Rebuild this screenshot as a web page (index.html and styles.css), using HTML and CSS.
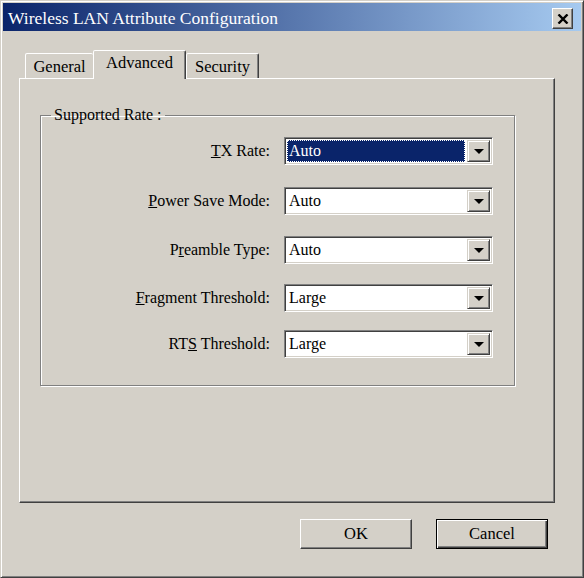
FILE: index.html
```html
<!DOCTYPE html>
<html lang="en">
<head>
    <meta charset="UTF-8">
    <title>Wireless LAN Attribute Configuration</title>
    <link rel="stylesheet" href="styles.css">
</head>
<body>
    <div class="window">
        <div class="titlebar">
            <span class="title">Wireless LAN Attribute Configuration</span>
            <span class="close">
                <svg width="12" height="10" viewBox="0 0 12 10"><path d="M1.5 0.5 L10.5 9.5 M10.5 0.5 L1.5 9.5" stroke="#000" stroke-width="2.4"/></svg>
            </span>
        </div>

        <div class="content">
            <div class="tabs">
                <div class="tab tab-general">General</div>
                <div class="tab tab-active">Advanced</div>
                <div class="tab tab-security">Security</div>
            </div>

            <div class="panel">
                <fieldset class="group">
                    <legend>Supported Rate :</legend>

                    <div class="row row-tx">
                        <label><u>T</u>X Rate:</label>
                        <div class="combo">
                            <span class="value selected">Auto</span>
                            <span class="drop"><span class="arrow"></span></span>
                        </div>
                    </div>
                    <div class="row row-power">
                        <label><u>P</u>ower Save Mode:</label>
                        <div class="combo">
                            <span class="value">Auto</span>
                            <span class="drop"><span class="arrow"></span></span>
                        </div>
                    </div>
                    <div class="row row-preamble">
                        <label>P<u>r</u>eamble Type:</label>
                        <div class="combo">
                            <span class="value">Auto</span>
                            <span class="drop"><span class="arrow"></span></span>
                        </div>
                    </div>
                    <div class="row row-fragment">
                        <label><u>F</u>ragment Threshold:</label>
                        <div class="combo">
                            <span class="value">Large</span>
                            <span class="drop"><span class="arrow"></span></span>
                        </div>
                    </div>
                    <div class="row row-rts">
                        <label>RT<u>S</u> Threshold:</label>
                        <div class="combo">
                            <span class="value">Large</span>
                            <span class="drop"><span class="arrow"></span></span>
                        </div>
                    </div>
                </fieldset>
            </div>

            <div class="actions">
                <button class="btn">OK</button>
                <button class="btn btn-default">Cancel</button>
            </div>
        </div>
    </div>
</body>
</html>
```

FILE: styles.css
```css
body {
    margin: 0;
    background: #d4d0c8;
    font-family: "Liberation Serif", "Times New Roman", serif;
    font-size: 16px;
    color: #000;
}
.window {
    box-sizing: border-box;
    width: 584px;
    height: 578px;
    padding: 2px;
    background: #d4d0c8;
    border: 1px solid;
    border-color: #d4d0c8 #404040 #404040 #d4d0c8;
    box-shadow: inset 1px 1px #fff, inset -1px -1px #808080;
}
.titlebar {
    height: 28px;
    display: flex;
    align-items: center;
    justify-content: space-between;
    background: linear-gradient(to right, #0a246a, #a6caf0);
    color: #fff;
}
.title {
    font-size: 17.5px;
    padding-left: 5px;
    padding-top: 2px;
}
.close {
    box-sizing: border-box;
    width: 21px;
    height: 21px;
    margin-right: 8px;
    margin-top: 3px;
    display: flex;
    align-items: center;
    justify-content: center;
    background: #d4d0c8;
    border: 1px solid;
    border-color: #fff #404040 #404040 #fff;
    box-shadow: inset -1px -1px #808080;
}
.content {
    padding: 19px 0 0 16px;
}
.tabs {
    display: flex;
    align-items: flex-end;
    height: 28px;
    padding-left: 6px;
    position: relative;
    z-index: 1;
}
.tab {
    box-sizing: border-box;
    height: 25px;
    display: flex;
    align-items: center;
    justify-content: center;
    background: #d4d0c8;
    border: 1px solid;
    border-bottom: none;
    border-color: #fff #404040 transparent #fff;
    border-radius: 2px 2px 0 0;
    box-shadow: inset -1px 0 #808080;
    padding-top: 2px;
    font-size: 16.5px;
}
.tab-general {
    width: 68px;
    border-right: none;
    box-shadow: none;
}
.tab-active {
    width: 93px;
    height: 29px;
    margin-bottom: -1px;
    padding-top: 0;
    padding-bottom: 4px;
}
.tab-security {
    width: 73px;
}
.panel {
    box-sizing: border-box;
    width: 536px;
    height: 425px;
    border: 1px solid;
    border-color: #fff #404040 #404040 #fff;
    box-shadow: inset -1px -1px #808080;
    padding: 28px 0 0 20px;
}
.group {
    box-sizing: border-box;
    width: 475px;
    height: 279px;
    margin: 0;
    padding: 0;
    border: 1px solid #808080;
    box-shadow: inset 1px 1px #fff, 1px 1px #fff;
}
.group legend {
    line-height: 16px;
    margin-left: 10px;
    padding: 0 3px;
}
.row {
    display: flex;
    align-items: center;
}
.row-tx { margin-top: 14px; }
.row-power { margin-top: 22px; }
.row-preamble { margin-top: 21px; }
.row-fragment { margin-top: 20px; }
.row-rts { margin-top: 18px; }
.row label {
    width: 229px;
    text-align: right;
    padding-right: 14px;
}
.combo {
    box-sizing: border-box;
    width: 209px;
    height: 28px;
    display: flex;
    align-items: stretch;
    background: #fff;
    border: 1px solid;
    border-color: #808080 #fff #fff #808080;
    box-shadow: inset 1px 1px #404040, inset -1px -1px #d4d0c8;
    padding: 2px;
}
.value {
    flex: 1;
    display: flex;
    align-items: center;
    padding-left: 2px;
    margin-right: 2px;
}
.value.selected {
    background: #0a246a;
    color: #fff;
    outline: 1px dotted #fff;
    outline-offset: -1px;
}
.drop {
    box-sizing: border-box;
    width: 23px;
    display: flex;
    align-items: center;
    justify-content: center;
    background: #d4d0c8;
    border: 1px solid;
    border-color: #d4d0c8 #404040 #404040 #d4d0c8;
    box-shadow: inset 1px 1px #fff, inset -1px -1px #808080;
}
.arrow {
    width: 0;
    height: 0;
    border-left: 5px solid transparent;
    border-right: 5px solid transparent;
    border-top: 5px solid #000;
    margin-top: 1px;
}
.actions {
    display: flex;
    justify-content: flex-end;
    gap: 24px;
    margin-top: 16px;
    padding-right: 33px;
}
.btn {
    box-sizing: border-box;
    width: 112px;
    height: 30px;
    font-family: inherit;
    font-size: 16.5px;
    color: #000;
    background: #d4d0c8;
    border: 1px solid;
    border-color: #fff #404040 #404040 #fff;
    box-shadow: inset -1px -1px #808080;
    padding: 0;
}
.btn-default {
    border: 1px solid #000;
    box-shadow: inset 1px 1px #fff, inset -1px -1px #404040, inset -2px -2px #808080;
}
```
